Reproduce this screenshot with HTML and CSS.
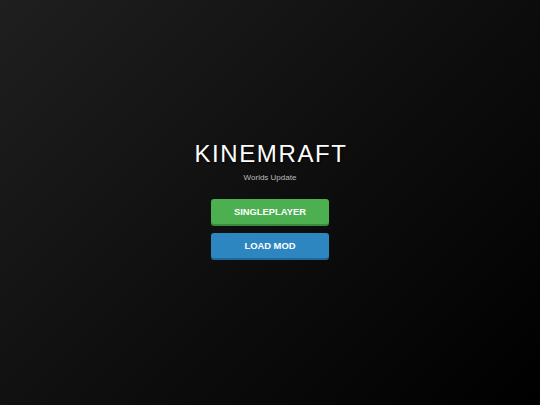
FILE: index.html
```html
<!DOCTYPE html>
<html>
<head>
<meta charset="utf-8">
<link rel="stylesheet" href="styles.css">
</head>
<body>
<div class="menu">
  <h1 class="title">KINEMRAFT</h1>
  <div class="subtitle">Worlds Update</div>
  <div class="buttons">
    <button class="btn btn-green">SINGLEPLAYER</button>
    <button class="btn btn-blue">LOAD MOD</button>
  </div>
</div>
</body>
</html>
```
FILE: styles.css
```css
html, body {
  margin: 0;
  padding: 0;
  width: 540px;
  height: 405px;
  overflow: hidden;
}
body {
  background: linear-gradient(135deg, #1f1f1f 0%, #0d0d0d 55%, #000 100%);
  font-family: "Liberation Sans", Arial, sans-serif;
  display: flex;
  align-items: center;
  justify-content: center;
}
.menu {
  display: flex;
  flex-direction: column;
  align-items: center;
  margin-top: -7px;
}
.title {
  margin: 0;
  font-weight: normal;
  font-size: 24px;
  letter-spacing: 1.6px;
  color: #fff;
  line-height: 28px;
  text-shadow: 1px 1px 2px rgba(0,0,0,0.8);
  margin-left: 2px;
}
.subtitle {
  font-size: 8px;
  color: #bbb;
  margin-top: 4px;
  line-height: 12px;
}
.buttons {
  display: flex;
  flex-direction: column;
  gap: 9px;
  margin-top: 15px;
}
.btn {
  width: 118px;
  height: 25px;
  border: none;
  border-radius: 3px;
  color: #fff;
  font-family: "Liberation Sans", Arial, sans-serif;
  font-weight: bold;
  font-size: 9.4px;
  padding: 0;
  margin: 0;
}
.btn-green {
  background: #4caf50;
  box-shadow: 0 2px 0 #3a8a3d;
}
.btn-blue {
  background: #2e86c1;
  box-shadow: 0 2px 0 #22679a;
}
```
